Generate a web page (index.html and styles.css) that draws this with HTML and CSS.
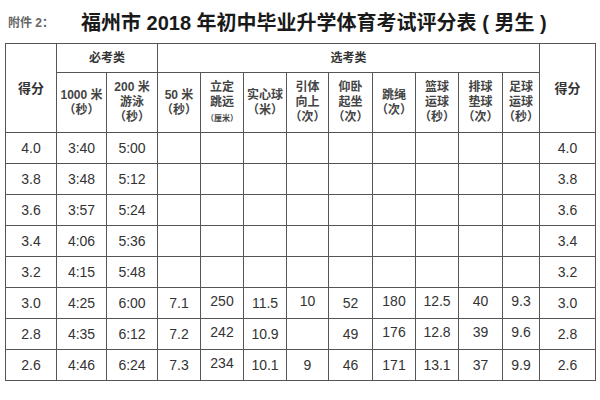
FILE: index.html
```html
<!DOCTYPE html>
<html lang="zh-CN">
<head>
<meta charset="utf-8">
<title>福州市 2018 年初中毕业升学体育考试评分表（男生）</title>
<link rel="stylesheet" href="styles.css">
</head>
<body>
<div class="page">
  <div class="title-row">
    <span class="annex">附件 2：</span>
    <h1 class="title">福州市 2018 年初中毕业升学体育考试评分表 ( 男生 )</h1>
  </div>
  <table class="score">
    <colgroup>
      <col class="c51"><col class="c50"><col class="c51"><col class="c43"><col class="c43"><col class="c43"><col class="c42"><col class="c44"><col class="c43"><col class="c43"><col class="c44"><col class="c37"><col class="c56">
    </colgroup>
    <thead>
      <tr class="h1">
        <th rowspan="2" class="strong">得分</th>
        <th colspan="2" class="group">必考类</th>
        <th colspan="9" class="group">选考类</th>
        <th rowspan="2" class="strong">得分</th>
      </tr>
      <tr class="h2">
        <th>1000 米<br>（秒）</th>
        <th>200 米<br>游泳<br>（秒）</th>
        <th>50 米<br>（秒）</th>
        <th>立定<br>跳远<br><span class="tiny">（厘米）</span></th>
        <th>实心球<br>（米）</th>
        <th>引体<br>向上<br>（次）</th>
        <th>仰卧<br>起坐<br>（次）</th>
        <th>跳绳<br>（次）</th>
        <th>篮球<br>运球<br>（秒）</th>
        <th>排球<br>垫球<br>（次）</th>
        <th>足球<br>运球<br>（秒）</th>
      </tr>
    </thead>
    <tbody>
      <tr><td>4.0</td><td>3:40</td><td>5:00</td><td></td><td></td><td></td><td></td><td></td><td></td><td></td><td></td><td></td><td>4.0</td></tr>
      <tr><td>3.8</td><td>3:48</td><td>5:12</td><td></td><td></td><td></td><td></td><td></td><td></td><td></td><td></td><td></td><td>3.8</td></tr>
      <tr><td>3.6</td><td>3:57</td><td>5:24</td><td></td><td></td><td></td><td></td><td></td><td></td><td></td><td></td><td></td><td>3.6</td></tr>
      <tr><td>3.4</td><td>4:06</td><td>5:36</td><td></td><td></td><td></td><td></td><td></td><td></td><td></td><td></td><td></td><td>3.4</td></tr>
      <tr><td>3.2</td><td>4:15</td><td>5:48</td><td></td><td></td><td></td><td></td><td></td><td></td><td></td><td></td><td></td><td>3.2</td></tr>
      <tr><td>3.0</td><td>4:25</td><td>6:00</td><td>7.1</td><td class="up">250</td><td>11.5</td><td class="up">10</td><td>52</td><td class="up">180</td><td class="up">12.5</td><td class="up">40</td><td class="up">9.3</td><td>3.0</td></tr>
      <tr><td>2.8</td><td>4:35</td><td>6:12</td><td>7.2</td><td class="up">242</td><td>10.9</td><td></td><td>49</td><td class="up">176</td><td class="up">12.8</td><td class="up">39</td><td class="up">9.6</td><td>2.8</td></tr>
      <tr><td>2.6</td><td>4:46</td><td>6:24</td><td>7.3</td><td class="up">234</td><td>10.1</td><td>9</td><td>46</td><td>171</td><td>13.1</td><td>37</td><td>9.9</td><td>2.6</td></tr>
    </tbody>
  </table>
</div>
</body>
</html>
```
FILE: styles.css
```css
html, body {
  margin: 0;
  padding: 0;
  background: #ffffff;
}

.page {
  width: 600px;
  height: 400px;
  font-family: "Liberation Sans", "Noto Sans CJK SC", sans-serif;
  color: #333;
}

.title-row {
  display: flex;
  align-items: center;
  height: 43px;
  padding-left: 8px;
  box-sizing: border-box;
}

.annex {
  font-size: 12px;
  font-weight: bold;
  color: #666;
  width: 73px;
  flex: none;
}

.title {
  margin: 0;
  font-size: 20px;
  font-weight: bold;
  color: #1a1a1a;
  white-space: nowrap;
}

.score {
  margin-left: 5px;
  border-collapse: collapse;
  table-layout: fixed;
  width: 590px;
}

.c51 { width: 51px; }
.c50 { width: 50px; }
.c43 { width: 43px; }
.c42 { width: 42px; }
.c44 { width: 44px; }
.c37 { width: 37px; }
.c56 { width: 56px; }

.score th,
.score td {
  border: 1px solid #555;
  padding: 0;
  text-align: center;
  vertical-align: middle;
}

.score th {
  font-size: 12px;
  line-height: 15px;
  font-weight: bold;
  color: #444;
}

.h1 th { height: 28px; }
.h2 th { height: 59px; }

.score th.strong {
  font-size: 13px;
  color: #333;
}

.score th.group {
  font-size: 12px;
  color: #333;
}

.tiny {
  font-size: 8px;
}

.score td {
  height: 30px;
  font-size: 14px;
  color: #333;
}

.score td.up {
  height: 26px;
  padding-bottom: 4px;
}
```
